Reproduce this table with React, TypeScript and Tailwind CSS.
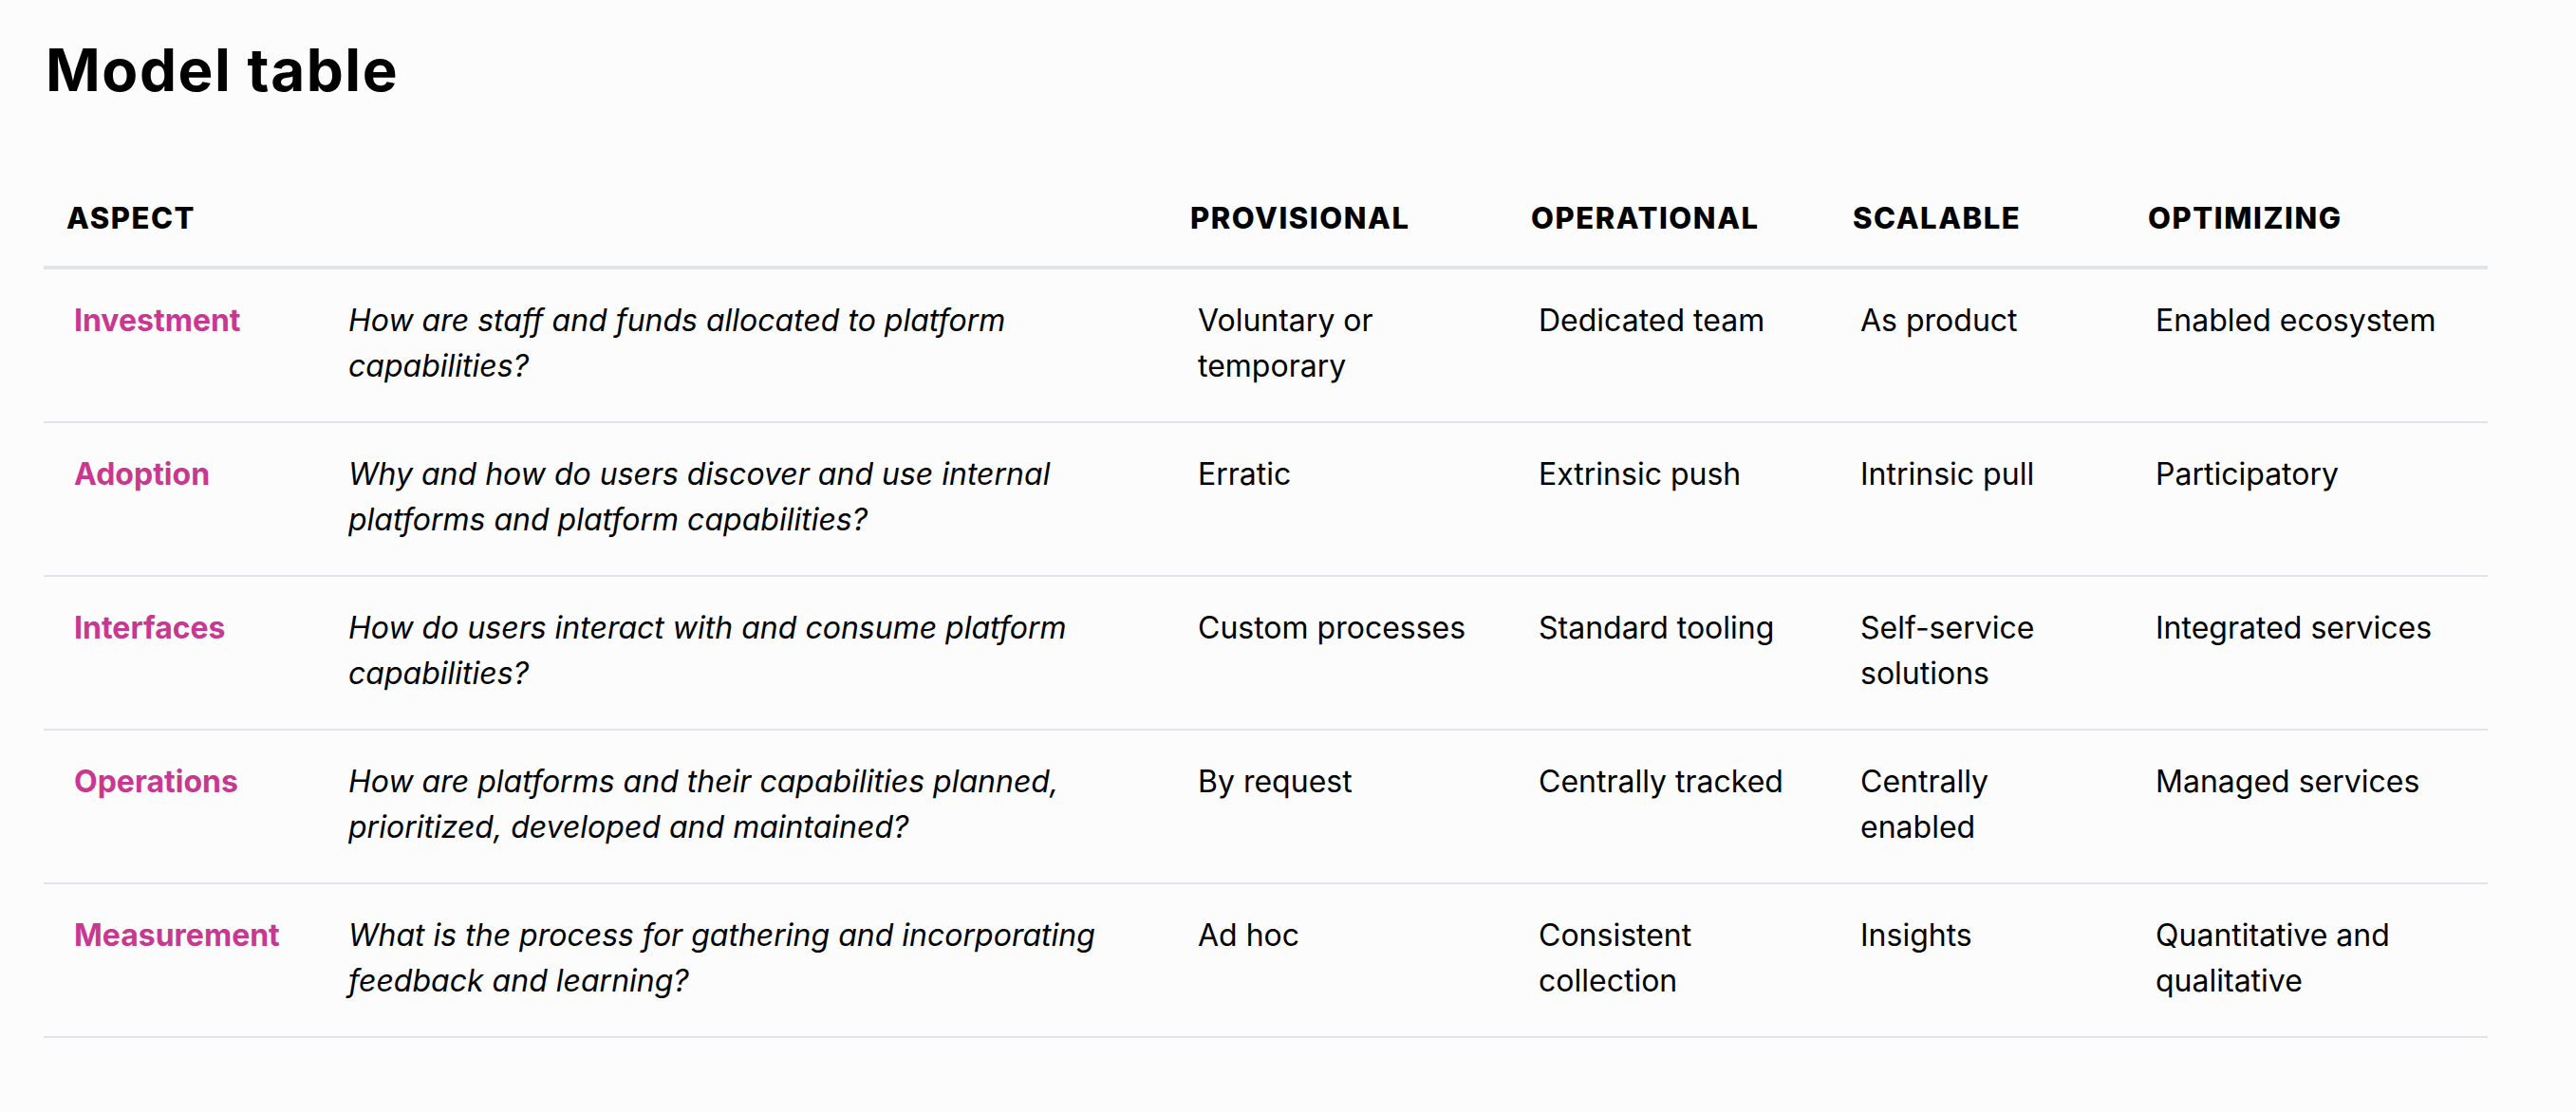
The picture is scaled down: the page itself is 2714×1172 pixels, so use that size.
import * as React from "react";

type Row = {
  aspect: string;
  question: string;
  levels: [string, string, string, string];
};

const rows: Row[] = [
  {
    aspect: "Investment",
    question: "How are staff and funds allocated to platform capabilities?",
    levels: ["Voluntary or temporary", "Dedicated team", "As product", "Enabled ecosystem"],
  },
  {
    aspect: "Adoption",
    question: "Why and how do users discover and use internal platforms and platform capabilities?",
    levels: ["Erratic", "Extrinsic push", "Intrinsic pull", "Participatory"],
  },
  {
    aspect: "Interfaces",
    question: "How do users interact with and consume platform capabilities?",
    levels: ["Custom processes", "Standard tooling", "Self-service solutions", "Integrated services"],
  },
  {
    aspect: "Operations",
    question: "How are platforms and their capabilities planned, prioritized, developed and maintained?",
    levels: ["By request", "Centrally tracked", "Centrally enabled", "Managed services"],
  },
  {
    aspect: "Measurement",
    question: "What is the process for gathering and incorporating feedback and learning?",
    levels: ["Ad hoc", "Consistent collection", "Insights", "Quantitative and qualitative"],
  },
];

const levels = ["Provisional", "Operational", "Scalable", "Optimizing"];

export default function App() {
  return (
    <div
      className="min-h-screen bg-[#fcfcfc] pl-[46px] pt-[43px] text-black"
      style={{ fontFamily: "Inter, 'Noto Sans', sans-serif" }}
    >
      <h1 className="pl-[2px] text-[62px] font-bold leading-none tracking-[0.025em]">Model table</h1>

      <table className="mt-[69px] w-[2575px] table-fixed border-collapse text-left">
        <colgroup>
          <col className="w-[289px]" />
          <col className="w-[895px]" />
          <col className="w-[359px]" />
          <col className="w-[339px]" />
          <col className="w-[311px]" />
          <col className="w-[382px]" />
        </colgroup>
        <thead>
          <tr className="border-b-4 border-[#e1e4e9]">
            <th colSpan={2} className="pl-6 pt-8 pb-[26px] text-[31px] font-extrabold uppercase leading-[48px] tracking-[0.05em]">
              Aspect
            </th>
            {levels.map((l) => (
              <th key={l} className="pl-6 pt-8 pb-[26px] text-[31px] font-extrabold uppercase leading-[48px] tracking-[0.05em]">
                {l}
              </th>
            ))}
          </tr>
        </thead>
        <tbody className="text-[32px] leading-[48px]">
          {rows.map((r) => (
            <tr key={r.aspect} className="border-b-2 border-[#e1e4e9] align-top">
              <td className="px-8 pt-[30px] pb-[34px] font-bold text-[#c93890]">{r.aspect}</td>
              <td className="px-8 pt-[30px] pb-[34px] italic">{r.question}</td>
              {r.levels.map((v, i) => (
                <td key={i} className="px-8 pt-[30px] pb-[34px]">
                  {v}
                </td>
              ))}
            </tr>
          ))}
        </tbody>
      </table>
    </div>
  );
}
